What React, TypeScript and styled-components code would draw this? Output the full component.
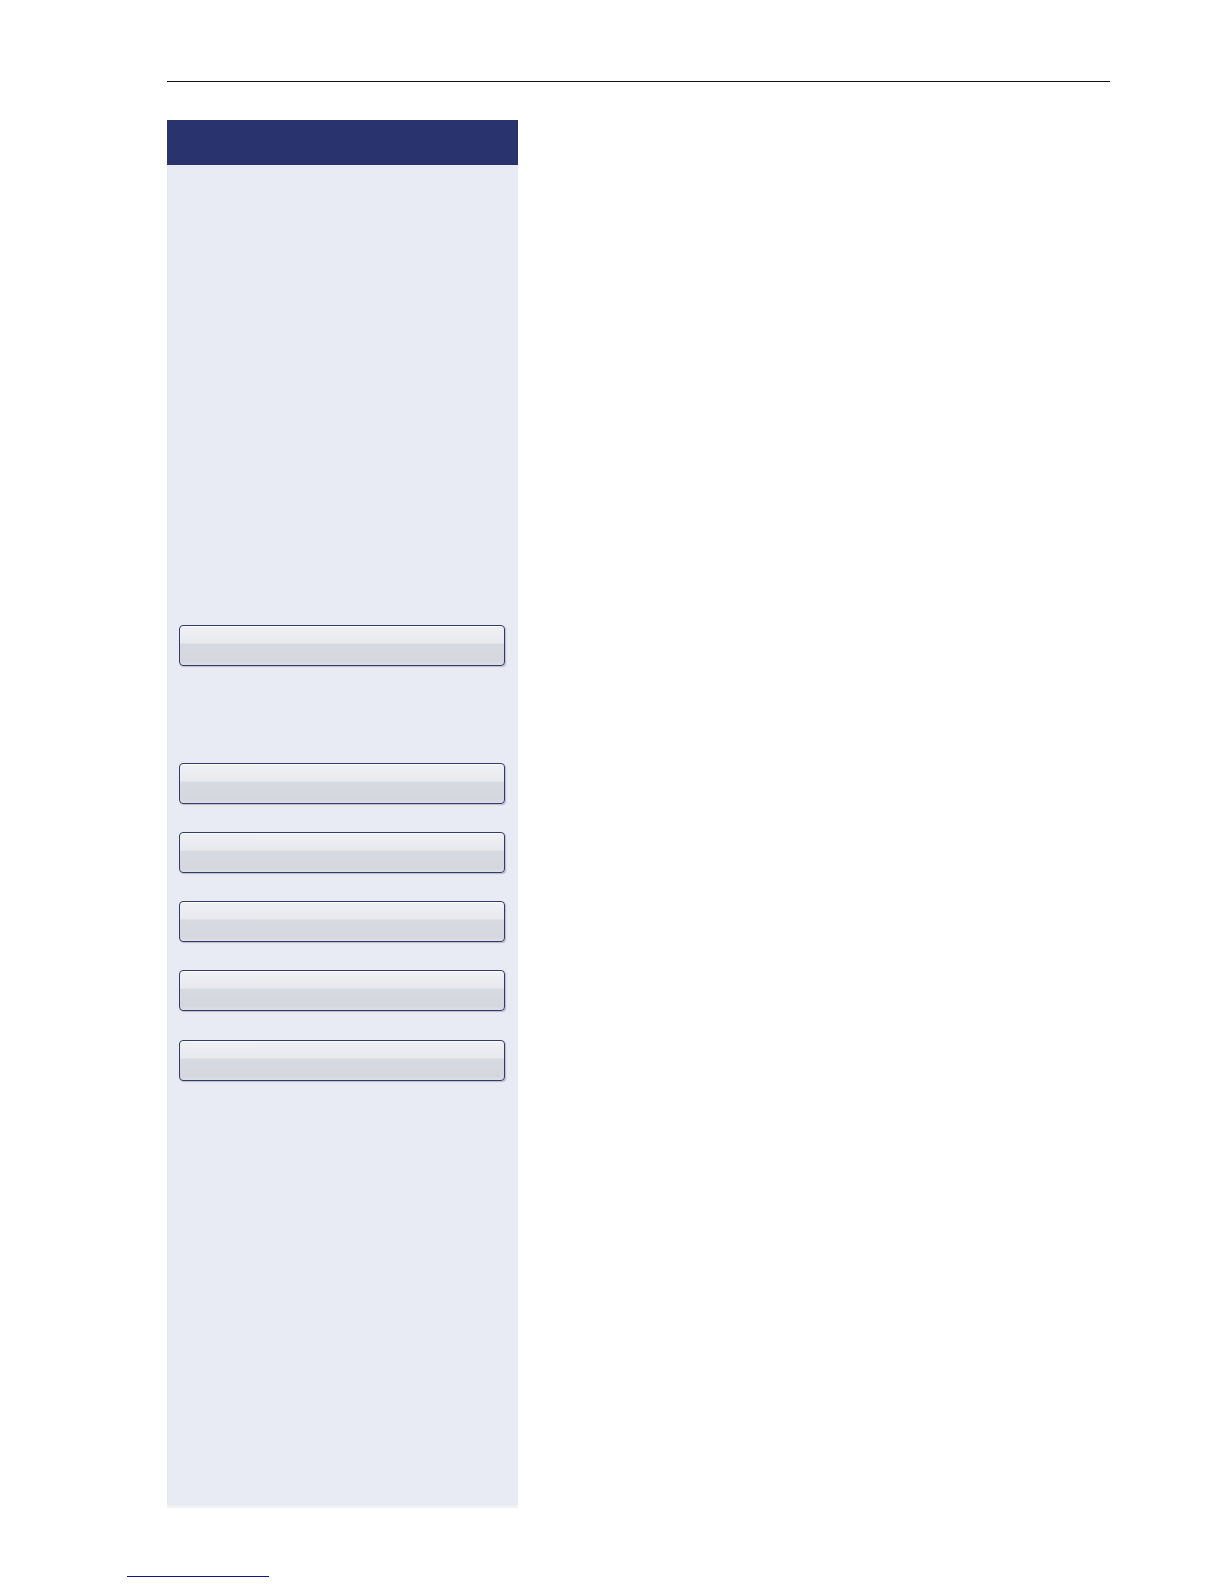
import React from "react";
import styled, { createGlobalStyle } from "styled-components";

const GlobalStyle = createGlobalStyle`
  html, body {
    margin: 0;
    padding: 0;
    background: #ffffff;
    font-family: "Liberation Sans", Arial, sans-serif;
  }
`;

const Page = styled.div`
  width: 1224px;
  min-height: 1584px;
  display: flex;
  flex-direction: column;
  padding-top: 81px;
  box-sizing: border-box;
`;

const TopRule = styled.div`
  margin-left: 167px;
  width: 943px;
  height: 1px;
  background: #111111;
`;

const Panel = styled.section`
  margin-top: 38px;
  margin-left: 167px;
  width: 351px;
  height: 1388px;
  display: flex;
  flex-direction: column;
  background: #e8ebf3;
  border-bottom: 3px solid #eff1f6;
  box-sizing: border-box;
`;

const Header = styled.header`
  height: 45px;
  background: #29346f;
  flex-shrink: 0;
`;

const Keys = styled.div`
  display: flex;
  flex-direction: column;
  padding: 460px 13px 0 12px;
`;

const Key = styled.button<{ $gap: number }>`
  margin-top: ${(p) => p.$gap}px;
  height: 41px;
  width: 100%;
  padding: 0;
  border: 1px solid #363b66;
  border-radius: 4px;
  background: linear-gradient(
    to bottom,
    #f0f1f5 0%,
    #e7e9ee 44%,
    #d7dae1 46%,
    #d4d7de 90%,
    #dcdfe6 100%
  );
  box-shadow: inset 0 1px 0 #fafbfd, 1px 1px 1px rgba(40, 45, 90, 0.25);
  font-family: "Liberation Sans", Arial, sans-serif;
  font-size: 15px;
  color: #1c2350;
  cursor: pointer;
`;

const FootRule = styled.div`
  margin-top: 68px;
  margin-left: 127px;
  width: 142px;
  height: 1px;
  background: #12128c;
`;

const keyGaps = [0, 97, 28, 28, 28, 29];

export default function App() {
  return (
    <>
      <GlobalStyle />
      <Page>
        <TopRule />
        <Panel>
          <Header />
          <Keys>
            {keyGaps.map((gap, i) => (
              <Key key={i} $gap={gap} type="button" />
            ))}
          </Keys>
        </Panel>
        <FootRule />
      </Page>
    </>
  );
}
